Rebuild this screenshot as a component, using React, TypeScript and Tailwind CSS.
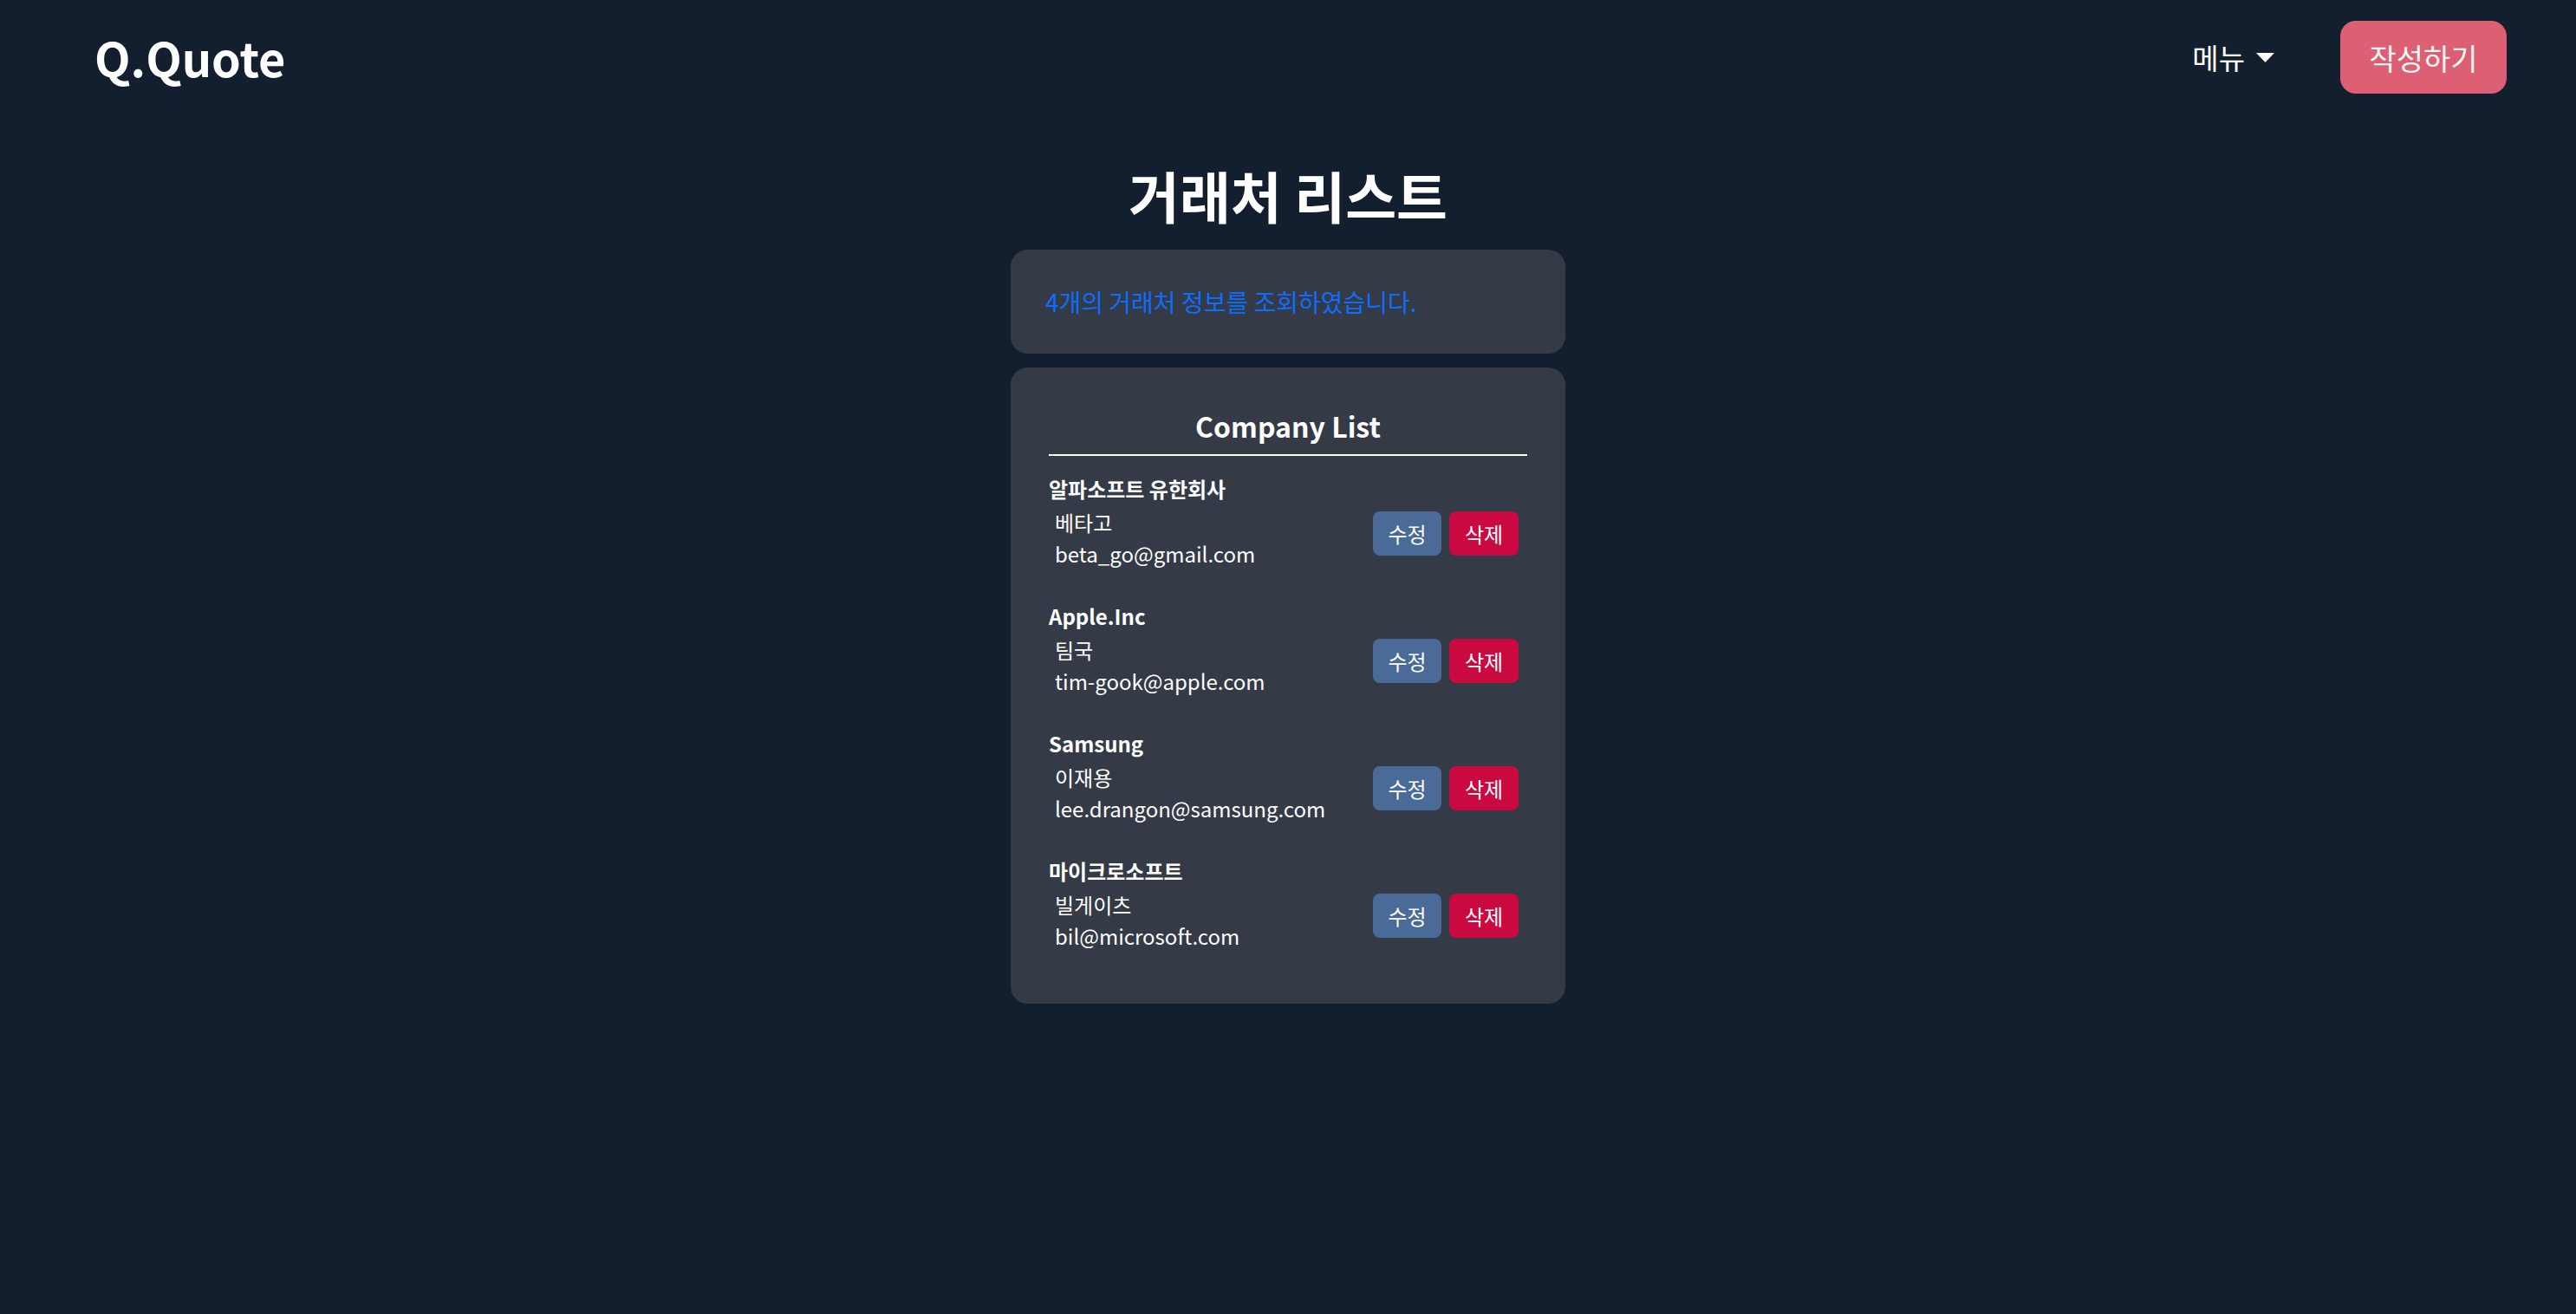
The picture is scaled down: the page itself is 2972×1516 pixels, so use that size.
const companies = [
  { name: "알파소프트 유한회사", contact: "베타고", email: "beta_go@gmail.com" },
  { name: "Apple.Inc", contact: "팀국", email: "tim-gook@apple.com" },
  { name: "Samsung", contact: "이재용", email: "lee.drangon@samsung.com" },
  { name: "마이크로소프트", contact: "빌게이츠", email: "bil@microsoft.com" },
];

export default function App() {
  return (
    <div className="min-h-screen bg-[#131f2f] text-white font-['Noto_Sans_CJK_KR','Noto_Sans',sans-serif]">
      <header className="flex items-center justify-between pl-[109px] pr-[80px] py-6">
        <div className="text-[54px] font-bold leading-none">Q.Quote</div>
        <div className="flex items-center gap-[76px]">
          <button className="flex items-center gap-[13px] text-[33px] leading-none text-white">
            <span>메뉴</span>
            <svg width="21" height="11" viewBox="0 0 21 11">
              <path d="M0 0H21L10.5 11Z" fill="white" />
            </svg>
          </button>
          <button className="flex h-[84px] w-[192px] items-center justify-center rounded-[18px] bg-[#dc5f74] text-[34px] text-[#f5f5f5]">
            작성하기
          </button>
        </div>
      </header>
      <main className="flex flex-col items-center">
        <h1 className="mt-[60px] text-[64px] font-bold leading-none">거래처 리스트</h1>
        <div className="mt-8 w-[640px] rounded-[20px] bg-[#353a47] px-10 py-10 text-[28px] leading-[40px] text-[#0d6efd]">
          4개의 거래처 정보를 조회하였습니다.
        </div>
        <div className="mt-4 w-[640px] rounded-[20px] bg-[#353a47] px-11 pt-[43px] pb-[60px]">
          <h2 className="border-b-2 border-white pb-[9px] text-center text-[32px] font-bold leading-[48px]">
            Company List
          </h2>
          <ul className="mt-5 flex flex-col gap-[36px]">
            {companies.map((c) => (
              <li key={c.email}>
                <div className="text-[24px] font-bold leading-[36px]">{c.name}</div>
                <div className="mt-[3px] flex items-center justify-between pr-[10px]">
                  <div className="pl-[7px] text-[24px] leading-[36px]">
                    <div>{c.contact}</div>
                    <div>{c.email}</div>
                  </div>
                  <div className="mb-[11px] flex gap-[9px]">
                    <button className="flex h-[51px] w-[79px] items-center justify-center rounded-[8px] bg-[#4a6b98] text-[24px] text-white">
                      수정
                    </button>
                    <button className="flex h-[51px] w-[80px] items-center justify-center rounded-[8px] bg-[#c9093f] text-[24px] text-white">
                      삭제
                    </button>
                  </div>
                </div>
              </li>
            ))}
          </ul>
        </div>
      </main>
    </div>
  );
}
